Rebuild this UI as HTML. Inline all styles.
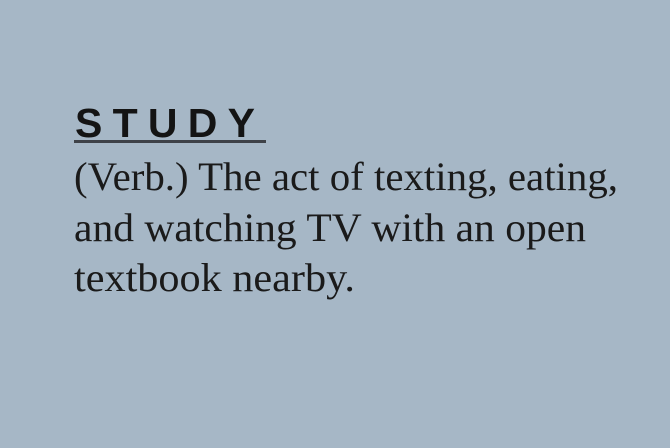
<!DOCTYPE html>
<html><head><meta charset="utf-8"><style>
html,body{margin:0;padding:0;width:670px;height:448px;background:#a6b7c6;overflow:hidden}
</style></head><body>
<svg width="670" height="448" xmlns="http://www.w3.org/2000/svg" style="display:block">
<rect width="670" height="448" fill="#a6b7c6"/>
<text x="75" y="137" font-family="Liberation Sans, sans-serif" font-weight="bold" font-size="41" fill="#141414" textLength="180" lengthAdjust="spacing">STUDY</text>
<rect x="74" y="140" width="192" height="3" fill="#3e4248"/>
<g font-family="Liberation Serif, serif" font-size="40" fill="#1a1a1a">
<text x="74" y="190" textLength="544" lengthAdjust="spacingAndGlyphs">(Verb.) The act of texting, eating,</text>
<text x="74" y="241" textLength="512" lengthAdjust="spacingAndGlyphs">and watching TV with an open</text>
<text x="74" y="291" textLength="281" lengthAdjust="spacingAndGlyphs">textbook nearby.</text>
</g>
</svg>
</body></html>
